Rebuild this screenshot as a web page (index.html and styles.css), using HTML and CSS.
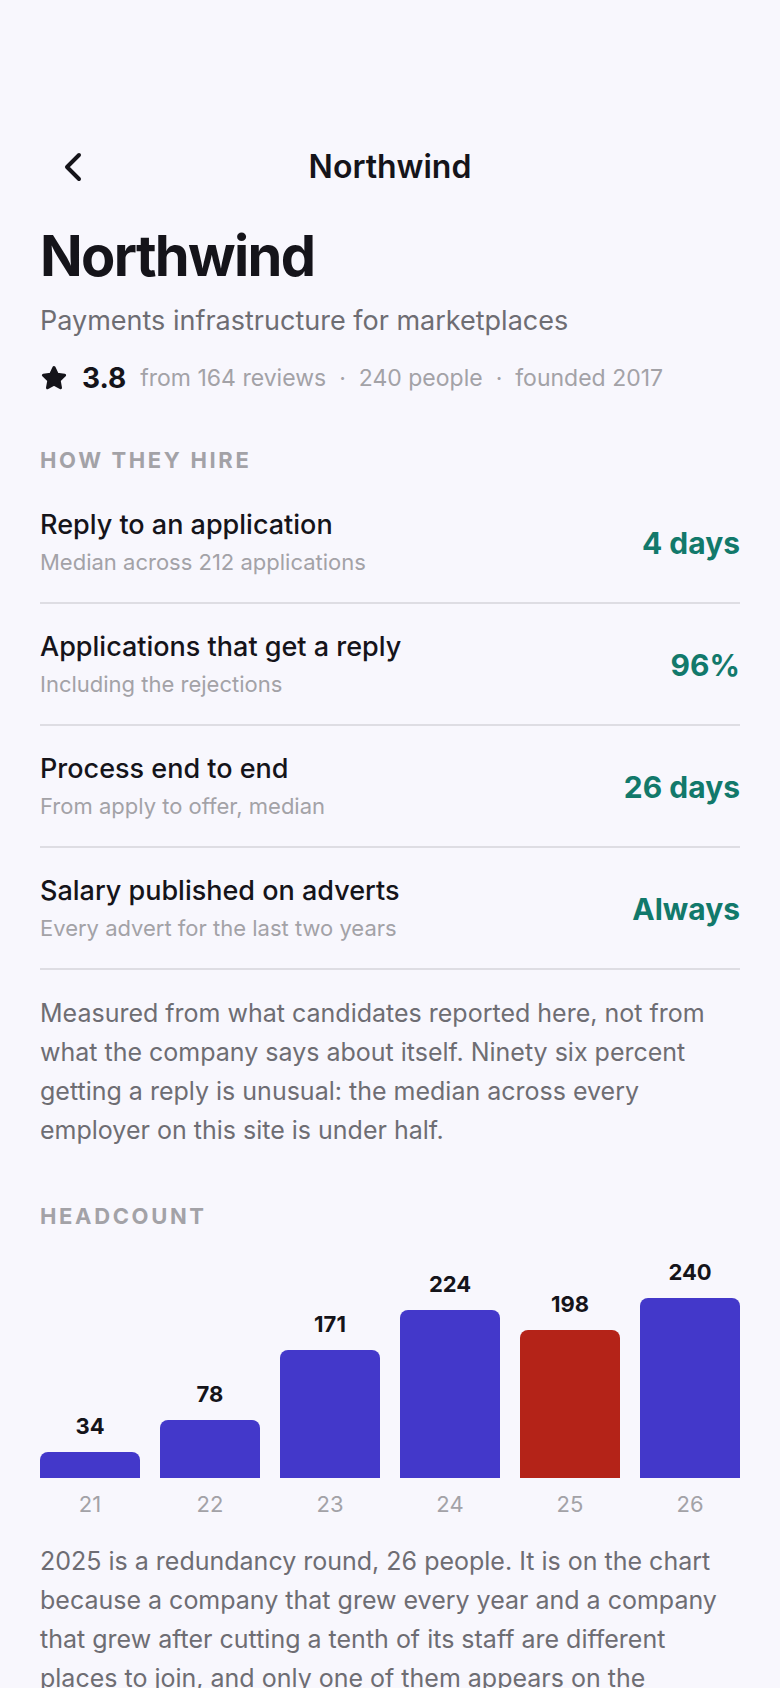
FILE: index.html
```html
<!DOCTYPE html>
<html lang="en">
<head>
  <meta charset="UTF-8">
  <meta name="viewport" content="width=device-width, initial-scale=1.0">
  <title>Northwind</title>
  <link rel="stylesheet" href="styles.css">
</head>
<body>
  <div class="screen">
    <header class="topbar">
      <button class="back" type="button" aria-label="Back">
        <svg viewBox="0 0 24 36" width="24" height="36"><path d="M19 6 L7 18 L19 30"/></svg>
      </button>
      <div class="topbar-title">Northwind</div>
    </header>

    <main class="content">
      <h1>Northwind</h1>
      <p class="tagline">Payments infrastructure for marketplaces</p>
      <div class="meta">
        <svg class="star" viewBox="0 0 28 28" width="28" height="28"><path d="M14 3.5 L17.2 10.2 L24.6 11.2 L19.2 16.4 L20.5 23.7 L14 20.2 L7.5 23.7 L8.8 16.4 L3.4 11.2 L10.8 10.2 Z"/></svg>
        <strong class="score">3.8</strong>
        <span>from 164 reviews</span>
        <span>·</span>
        <span>240 people</span>
        <span>·</span>
        <span>founded 2017</span>
      </div>

      <!-- Hiring stats -->
      <section class="section">
        <h2>How they hire</h2>
        <ul class="stats">
          <li class="stat">
            <div>
              <div class="stat-name">Reply to an application</div>
              <div class="stat-note">Median across 212 applications</div>
            </div>
            <div class="stat-value">4 days</div>
          </li>
          <li class="stat">
            <div>
              <div class="stat-name">Applications that get a reply</div>
              <div class="stat-note">Including the rejections</div>
            </div>
            <div class="stat-value">96%</div>
          </li>
          <li class="stat">
            <div>
              <div class="stat-name">Process end to end</div>
              <div class="stat-note">From apply to offer, median</div>
            </div>
            <div class="stat-value">26 days</div>
          </li>
          <li class="stat">
            <div>
              <div class="stat-name">Salary published on adverts</div>
              <div class="stat-note">Every advert for the last two years</div>
            </div>
            <div class="stat-value">Always</div>
          </li>
        </ul>
        <p class="copy">Measured from what candidates reported here, not from what the company says about itself. Ninety six percent getting a reply is unusual: the median across every employer on this site is under half.</p>
      </section>

      <!-- Headcount chart -->
      <section class="section">
        <h2>Headcount</h2>
        <div class="chart">
          <div class="col"><b>34</b><div class="bar" style="height: 26px"></div><span>21</span></div>
          <div class="col"><b>78</b><div class="bar" style="height: 58px"></div><span>22</span></div>
          <div class="col"><b>171</b><div class="bar" style="height: 128px"></div><span>23</span></div>
          <div class="col"><b>224</b><div class="bar" style="height: 168px"></div><span>24</span></div>
          <div class="col"><b>198</b><div class="bar cut" style="height: 148px"></div><span>25</span></div>
          <div class="col"><b>240</b><div class="bar" style="height: 180px"></div><span>26</span></div>
        </div>
        <p class="copy">2025 is a redundancy round, 26 people. It is on the chart because a company that grew every year and a company that grew after cutting a tenth of its staff are different places to join, and only one of them appears on the</p>
      </section>
    </main>
  </div>
</body>
</html>
```

FILE: styles.css
```css
* { margin: 0; padding: 0; box-sizing: border-box; }
body { background-color: #f8f7fd; color: #15141a; font-family: Inter, sans-serif; font-variant-ligatures: none; }
.screen { height: 100vh; padding: 122px 40px 0; overflow: hidden; }

.topbar { display: grid; grid-template-columns: 88px 1fr 88px; align-items: center; height: 90px; }
.topbar-title { font-size: 32px; line-height: 40px; font-weight: 600; text-align: center; }
.back { display: flex; align-items: center; justify-content: center; width: 64px; height: 88px; background: none; border: none; cursor: pointer; }
.back svg { fill: none; stroke: #15141a; stroke-width: 4; stroke-linecap: round; stroke-linejoin: round; }

h1 { margin-top: 10px; font-size: 56px; line-height: 68px; font-weight: 700; letter-spacing: -0.03em; }
.tagline { margin-top: 13px; font-size: 27px; line-height: 36px; color: #6e6d73; }
.meta { display: flex; align-items: center; gap: 13px; margin-top: 21px; font-size: 23px; line-height: 36px; color: #a3a2a7; }
.star { fill: #15141a; stroke: #15141a; stroke-width: 3; stroke-linejoin: round; }
.score { margin: 0 1px; font-size: 28px; font-weight: 700; color: #15141a; }

.section { margin-top: 50px; }
h2 { font-size: 22px; line-height: 28px; font-weight: 700; letter-spacing: 0.12em; text-transform: uppercase; color: #a3a2a7; }
.stats { margin-top: 8px; list-style: none; }
.stat { display: flex; align-items: center; justify-content: space-between; padding: 25px 0 26px; border-bottom: 2px solid #dedde3; }
.stat-name { font-size: 27px; line-height: 36px; font-weight: 500; }
.stat-note { margin-top: 5px; font-size: 22px; line-height: 28px; color: #a3a2a7; }
.stat-value { padding-top: 3px; font-size: 30px; line-height: 36px; font-weight: 700; color: #12796b; }
.copy { margin-top: 24px; padding-bottom: 2px; font-size: 25px; line-height: 39px; color: #6e6d73; }

.chart { display: flex; align-items: flex-end; gap: 20px; margin-top: 28px; }
.col { flex: 1; text-align: center; font-size: 22px; line-height: 28px; }
.col b { display: block; font-weight: 700; }
.col span { display: block; margin-top: 12px; color: #a3a2a7; }
.bar { margin-top: 12px; border-radius: 8px 8px 0 0; background-color: #4338ca; }
.bar.cut { background-color: #b42318; }
```
